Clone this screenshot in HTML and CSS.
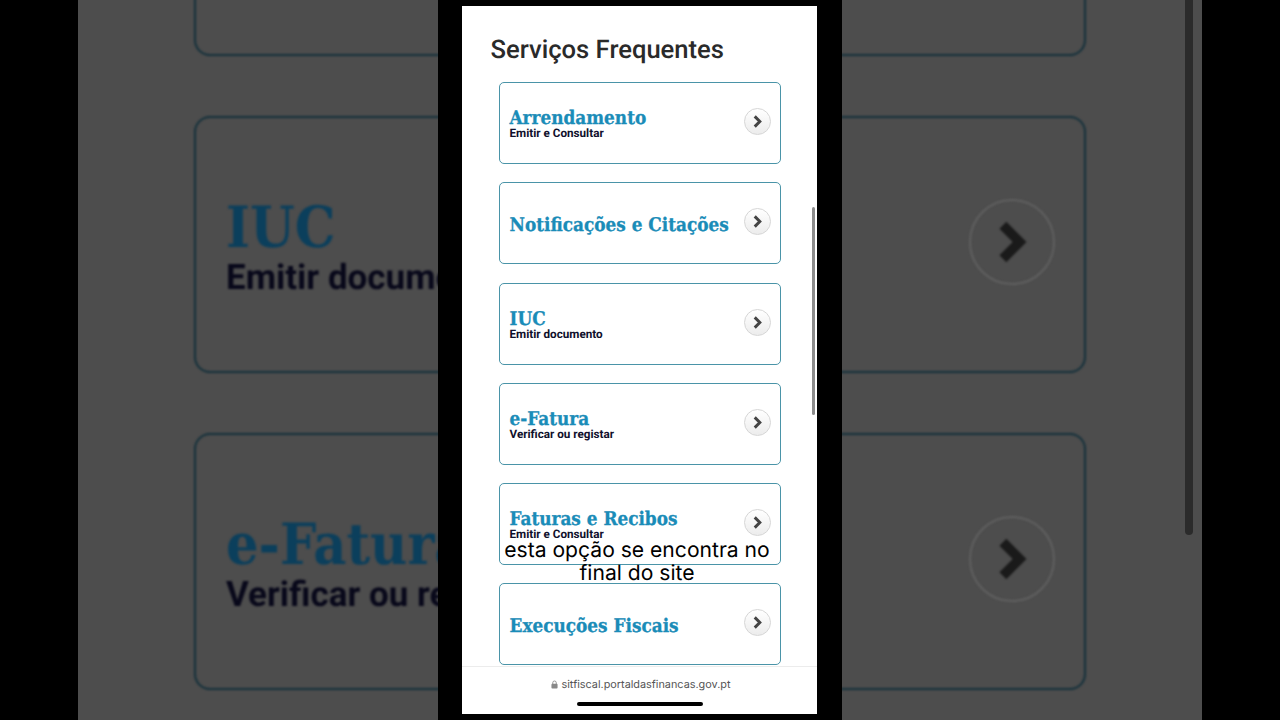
FILE: index.html
```html
<!DOCTYPE html>
<html lang="pt">
<head>
    <meta charset="UTF-8">
    <meta name="viewport" content="width=device-width, initial-scale=1.0">
    <title>Serviços Frequentes</title>
    <link rel="stylesheet" href="styles.css">
</head>
<body>
    <div class="backdrop">
        <div class="bg-list">
            <div class="bg-card"></div>
            <div class="bg-card">
                <div class="bg-text">
                    <div class="bg-title">IUC</div>
                    <div class="bg-sub">Emitir documento</div>
                </div>
                <div class="bg-arrow"><svg viewBox="0 0 27 27"><polyline points="10.500,8 16,13.500 10.500,19"/></svg></div>
            </div>
            <div class="bg-card">
                <div class="bg-text">
                    <div class="bg-title">e-Fatura</div>
                    <div class="bg-sub">Verificar ou registar</div>
                </div>
                <div class="bg-arrow"><svg viewBox="0 0 27 27"><polyline points="10.500,8 16,13.500 10.500,19"/></svg></div>
            </div>
        </div>
        <div class="bg-scroll"></div>
    </div>

    <div class="frame">
        <div class="phone">
            <h1>Serviços Frequentes</h1>
            <div class="card-list">
                <div class="card">
                    <div class="card-text">
                        <div class="card-title">Arrendamento</div>
                        <div class="card-sub">Emitir e Consultar</div>
                    </div>
                    <div class="arrow"><svg viewBox="0 0 27 27"><polyline points="10.500,8 16,13.500 10.500,19"/></svg></div>
                </div>
                <div class="card">
                    <div class="card-title solo">Notificações e Citações</div>
                    <div class="arrow"><svg viewBox="0 0 27 27"><polyline points="10.500,8 16,13.500 10.500,19"/></svg></div>
                </div>
                <div class="card">
                    <div class="card-text">
                        <div class="card-title">IUC</div>
                        <div class="card-sub">Emitir documento</div>
                    </div>
                    <div class="arrow"><svg viewBox="0 0 27 27"><polyline points="10.500,8 16,13.500 10.500,19"/></svg></div>
                </div>
                <div class="card">
                    <div class="card-text">
                        <div class="card-title">e-Fatura</div>
                        <div class="card-sub">Verificar ou registar</div>
                    </div>
                    <div class="arrow"><svg viewBox="0 0 27 27"><polyline points="10.500,8 16,13.500 10.500,19"/></svg></div>
                </div>
                <div class="card">
                    <div class="card-text">
                        <div class="card-title">Faturas e Recibos</div>
                        <div class="card-sub">Emitir e Consultar</div>
                    </div>
                    <div class="arrow"><svg viewBox="0 0 27 27"><polyline points="10.500,8 16,13.500 10.500,19"/></svg></div>
                </div>
                <div class="card">
                    <div class="card-title solo">Execuções Fiscais</div>
                    <div class="arrow"><svg viewBox="0 0 27 27"><polyline points="10.500,8 16,13.500 10.500,19"/></svg></div>
                </div>
            </div>
            <div class="url-bar">
                <svg class="lock" viewBox="0 0 8 10"><path d="M2 4.500V3a2 2 0 0 1 4 0v1.500"/><rect x="0.500" y="4.200" width="7" height="5.300" rx="1"/></svg>
                <span>sitfiscal.portaldasfinancas.gov.pt</span>
            </div>
            <div class="home-bar"></div>
            <div class="scroll-thumb"></div>
        </div>
    </div>

    <div class="caption">esta opção se encontra no<br>final do site</div>
</body>
</html>
```

FILE: styles.css
```css
html, body {
    margin: 0;
    height: 100%;
}
body {
    position: relative;
    width: 1280px;
    height: 720px;
    overflow: hidden;
    background-color: #000;
    font-family: Roboto, Arial, sans-serif;
    text-rendering: geometricPrecision;
}

/* blurred copy behind the phone */
.backdrop {
    position: relative;
    width: 1124px;
    height: 720px;
    margin-left: 78px;
    overflow: hidden;
    background-color: #4d4d4d;
}
.bg-list {
    display: flex;
    flex-direction: column;
    gap: 60px;
    width: 892px;
    margin: -201px 0 0 116px;
    filter: blur(0.8px);
}
.bg-card {
    display: flex;
    justify-content: space-between;
    align-items: center;
    box-sizing: border-box;
    height: 257px;
    flex-shrink: 0;
    padding: 0 29px 0 30px;
    border: 2px solid #14303b;
    border-radius: 16px;
}
.bg-text {
    margin-top: 10px;
}
.bg-title {
    font-family: "DejaVu Serif Condensed", "DejaVu Serif", serif;
    font-weight: bold;
    font-size: 57px;
    line-height: 54px;
    color: #0b3f5c;
}
.bg-sub {
    margin-top: 3px;
    font-weight: 700;
    font-size: 35px;
    line-height: 40px;
    color: #08081a;
}
.bg-arrow {
    box-sizing: border-box;
    width: 86px;
    height: 86px;
    margin-top: -5px;
    border: 2px solid #606060;
    border-radius: 50%;
}
.bg-arrow svg {
    display: block;
    width: 100%;
    height: 100%;
    fill: none;
    stroke: #1a1a1a;
    stroke-width: 3.200;
}
.bg-scroll {
    position: absolute;
    top: 0;
    left: 1107px;
    width: 8px;
    height: 535px;
    border-radius: 0 0 4px 4px;
    background-color: #2b2b2b;
}

/* black band with the phone in it */
.frame {
    position: absolute;
    top: 0;
    left: 438px;
    display: flex;
    justify-content: center;
    align-items: center;
    width: 404px;
    height: 720px;
    background-color: #000;
}
.phone {
    position: relative;
    display: flex;
    flex-direction: column;
    width: 355px;
    height: 708px;
    margin-right: 1px;
    overflow: hidden;
    background-color: #fff;
}
.phone h1 {
    margin: 28px 0 0 28.500px;
    font-size: 25.600px;
    line-height: 32px;
    font-weight: 500;
    color: #2a2a2a;
}
.card-list {
    display: flex;
    flex-direction: column;
    gap: 18.300px;
    margin: 16px 0 0 36.500px;
}
.card {
    display: flex;
    justify-content: space-between;
    align-items: center;
    box-sizing: border-box;
    width: 282px;
    height: 82px;
    padding: 0 9px 0 10px;
    border: 1px solid #4a94a8;
    border-radius: 5px;
}
.card-text {
    margin-top: 2px;
}
.card-title {
    font-family: "DejaVu Serif Condensed", "DejaVu Serif", serif;
    font-weight: bold;
    font-size: 18.800px;
    line-height: 18px;
    color: #1a8cb8;
    -webkit-text-stroke: 0.300px #1a8cb8;
}
.card-title.solo {
    margin-top: 4px;
}
.card-sub {
    font-size: 11.700px;
    font-weight: 700;
    line-height: 12px;
    color: #10102c;
}
.arrow {
    box-sizing: border-box;
    width: 27px;
    height: 27px;
    margin-top: -3px;
    border: 1px solid #d6d6d6;
    border-radius: 50%;
    background: linear-gradient(#fff, #ececec);
}
.arrow svg {
    display: block;
    width: 100%;
    height: 100%;
    fill: none;
    stroke: #444;
    stroke-width: 3.200;
}
.url-bar {
    display: flex;
    justify-content: center;
    align-items: center;
    gap: 4px;
    margin-top: 1px;
    height: 34px;
    padding-left: 2px;
    border-top: 1px solid #ececec;
    background-color: #fff;
    font-family: Inter, Arial, sans-serif;
    font-size: 10.850px;
    color: #555;
}
.lock {
    width: 7px;
    height: 9px;
    fill: #888;
}
.lock path {
    fill: none;
    stroke: #888;
}
.home-bar {
    width: 126px;
    height: 4px;
    margin: 1px auto 0;
    border-radius: 2px;
    background-color: #000;
}
.scroll-thumb {
    position: absolute;
    top: 201px;
    right: 2px;
    width: 3px;
    height: 208px;
    border-radius: 2px;
    background-color: #8c8c8c;
}

.caption {
    position: absolute;
    top: 539px;
    left: 434px;
    width: 406px;
    text-align: center;
    font-family: Inter, Arial, sans-serif;
    font-size: 21.100px;
    line-height: 23px;
    color: #000;
}
```
